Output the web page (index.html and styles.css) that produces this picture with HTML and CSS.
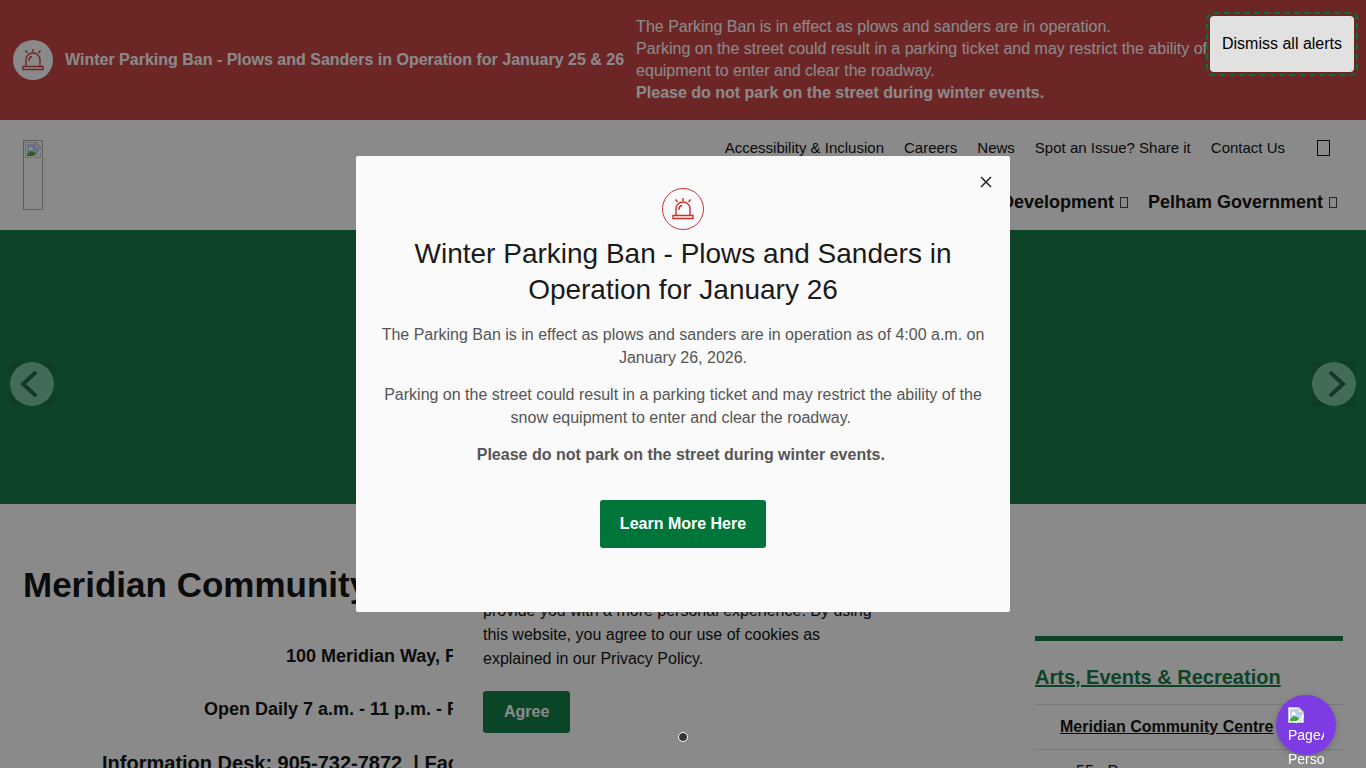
FILE: index.html
```html
<!DOCTYPE html>
<html lang="en"><head>
    <meta charset="UTF-8">
    <meta name="viewport" content="width=device-width, initial-scale=1.0">
    <title>Meridian Community Centre</title>
    <link rel="stylesheet" href="styles.css">
</head>
<body>
    <svg class="sprite" aria-hidden="true">
        <symbol id="siren" viewBox="0 0 24 24">
            <path d="M5 18.5V11.500a7 6.500 0 0 1 14 0v7M2 18.500h20v3h-20zM8 13v-1a4 3.500 0 0 1 3-3.500M12 1v3M4.500 2.500l2 2.500M19.500 2.500l-2 2.500" fill="none" stroke="currentColor" stroke-width="1.400"/>
        </symbol>
        <symbol id="broken" viewBox="0 0 16 16">
            <path d="M0 0h11l5 5v11H0z" fill="#c4c4c4"/>
            <path d="M1 1h9v5h5v9H1z" fill="#fff"/>
            <path d="M2 2h8v4h4v8H2z" fill="#b9d3f5"/>
            <path d="M4 6.500a1.500 1.500 0 0 1 3-.5 1 1 0 0 1 0 2H4z" fill="#fff"/>
            <path d="M2 14v-2l4-3 3 1 3 2v2z" fill="#46a33b"/>
            <path d="M10 0v6h6z" fill="#eee" stroke="#aaa" stroke-width=".7"/>
            <path d="M16 8v2l-7 6H6z" fill="#fff"/>
        </symbol>
    </svg>

    <section class="alert">
        <div class="alert-icon"><svg><use href="#siren"/></svg></div>
        <strong class="alert-title">Winter Parking Ban - Plows and Sanders in Operation for January 25 &amp; 26</strong>
        <div class="alert-text">
            The Parking Ban is in effect as plows and sanders are in operation.<br>
            Parking on the street could result in a parking ticket and may restrict the ability of the snow equipment to enter and clear the roadway.<br>
            <strong>Please do not park on the street during winter events.</strong>
        </div>
    </section>

    <header class="header">
        <a href="#" class="logo" aria-label="Home"><svg><use href="#broken"/></svg></a>
        <div class="menus">
            <nav class="top-links">
                <a href="#">Accessibility &amp; Inclusion</a>
                <a href="#">Careers</a>
                <a href="#">News</a>
                <a href="#">Spot an Issue? Share it</a>
                <a href="#">Contact Us</a>
                <button class="search" aria-label="Search"></button>
            </nav>
            <nav class="main-nav">
                <a href="#">Business Development <span class="caret"></span></a>
                <a href="#">Pelham Government <span class="caret"></span></a>
            </nav>
        </div>
    </header>

    <div class="hero"></div>

    <div class="page">
        <main class="content">
            <h1>Meridian Community Centre</h1>
            <p>100 Meridian Way, Fonthill, Ontario, Canada L0S 1E</p>
            <p>Open Daily 7 a.m. - 11 p.m. - Front Doors Lock at 10:30 p.m. each night</p>
            <p class="phones">Information Desk: 905-732-7872 &nbsp;| Facility Rentals and Room Bookings: 905-980-6661</p>
        </main>
        <aside class="sidebar">
            <h2><a href="#">Arts, Events &amp; Recreation</a></h2>
            <ul>
                <li><a href="#" class="current">Meridian Community Centre</a></li>
                <li><a href="#" class="child">55+ Programs</a></li>
            </ul>
        </aside>
    </div>

    <div class="cookies">
        <p>This website uses cookies to enhance usability and provide you with a more personal experience. By using this website, you agree to our use of cookies as explained in our Privacy Policy.</p>
        <button class="btn">Agree</button>
    </div>

    <div class="overlay">
        <button class="arrow" aria-label="Previous"><svg viewBox="0 0 44 44"><path d="M25 11L13 22l12 11"/></svg></button>
        <div class="modal" role="dialog" aria-labelledby="modal-title">
            <button class="close" aria-label="Close"><svg viewBox="0 0 10 10"><path d="M0 0l10 10M10 0L0 10"/></svg></button>
            <div class="modal-icon"><svg><use href="#siren"/></svg></div>
            <h2 id="modal-title">Winter Parking Ban - Plows and Sanders in Operation for January 26</h2>
            <p>The Parking Ban is in effect as plows and sanders are in operation as of 4:00 a.m. on January 26, 2026.</p>
            <p>Parking on the street could result in a parking ticket and may restrict the ability of the snow equipment to enter and clear the roadway.&nbsp;</p>
            <p><strong>Please do not park on the street during winter events.&nbsp;</strong></p>
            <a href="#" class="btn learn">Learn More Here</a>
        </div>
        <button class="arrow" aria-label="Next"><svg viewBox="0 0 44 44"><path d="M19 11l12 11-12 11"/></svg></button>
        <span class="dot"></span>
    </div>

    <button class="dismiss">Dismiss all alerts</button>
    <button class="assist">
        <span class="assist-label"><svg><use href="#broken"/></svg> PageAssist Personalize</span>
    </button>
</body>
</html>
```
FILE: styles.css
```css
* {
    box-sizing: border-box;
}
body {
    margin: 0;
    height: 100vh;
    overflow: hidden;
    font-family: "Liberation Sans", Arial, sans-serif;
    font-size: 16px;
    color: #000;
    background: #fff;
}
button {
    font-family: inherit;
    font-size: 16px;
    border: none;
    padding: 0;
    cursor: pointer;
}
a {
    color: inherit;
    text-decoration: none;
}
svg {
    display: block;
}
.sprite {
    position: absolute;
    width: 0;
    height: 0;
}

/* alert bar */
.alert {
    display: flex;
    align-items: center;
    gap: 12px;
    padding: 16px 13px;
    line-height: 22px;
    color: #fff;
    background: #c53737;
}
.alert-icon {
    display: flex;
    align-items: center;
    justify-content: center;
    flex: none;
    width: 40px;
    height: 40px;
    border-radius: 50%;
    color: #c53737;
    background: #fff;
}
.alert-icon svg {
    width: 24px;
    height: 24px;
}
.alert-title {
    flex: none;
}
.alert-text {
    flex: 1;
}
.dismiss {
    position: fixed;
    top: 16px;
    right: 12px;
    z-index: 20;
    padding: 19px 12px;
    line-height: 18px;
    color: #000;
    background: #e1e1e1;
    border-radius: 4px;
    outline: 2px dashed #007539;
    outline-offset: 2px;
}

/* header */
.header {
    display: flex;
    justify-content: space-between;
    padding: 20px 23px;
    height: 110px;
}
.logo {
    width: 20px;
    height: 70px;
    padding: 1px;
    border: 1px solid #aaa;
}
.logo svg {
    width: 16px;
    height: 16px;
}
.top-links,
.main-nav {
    display: flex;
    justify-content: flex-end;
    align-items: center;
    gap: 20px;
}
.top-links {
    font-size: 15px;
    line-height: 16px;
    padding-right: 13px;
}
.search {
    width: 13px;
    height: 16px;
    margin-left: 12px;
    background: none;
    border: 1px solid #000;
}
.main-nav {
    margin-top: 36px;
    padding-right: 6px;
    font-size: 18px;
    font-weight: bold;
    line-height: 20px;
}
.caret {
    display: inline-block;
    width: 8px;
    height: 11px;
    margin-left: 1px;
    border: 1px solid #333;
}
.hero {
    height: 274px;
    background: #057339;
}

/* page */
.page {
    display: grid;
    grid-template-columns: 1fr 308px;
    gap: 48px;
    padding: 60px 23px 0;
}
.content h1 {
    margin: 0 0 40px;
    font-size: 35px;
    line-height: 42px;
}
.content p {
    margin: 0 0 33px;
    font-size: 18px;
    font-weight: bold;
    line-height: 20px;
    text-align: center;
    white-space: nowrap;
}
.content .phones {
    font-size: 20px;
    line-height: 22px;
}
.sidebar {
    margin-top: 72px;
    border-top: 5px solid #057339;
}
.sidebar h2 {
    margin: 24px 0 15px;
    font-size: 20px;
    line-height: 24px;
    color: #057339;
}
.sidebar h2 a,
.current {
    text-decoration: underline;
}
.sidebar ul {
    margin: 0;
    padding: 0;
    list-style: none;
}
.sidebar li {
    padding: 12px 0 12px 25px;
    line-height: 20px;
    border-top: 1px solid #ddd;
}
.current {
    font-weight: bold;
}
.child {
    padding-left: 16px;
}

/* cookie notice */
.cookies {
    position: fixed;
    left: 50%;
    bottom: 0;
    width: 460px;
    margin-left: -230px;
    padding: 30px 30px 35px;
    background: #fff;
}
.cookies p {
    margin: 0 0 20px;
    line-height: 24px;
}
.btn {
    display: inline-block;
    padding: 12px 21px;
    line-height: 18px;
    font-weight: bold;
    color: #fff;
    background: #007539;
    border-radius: 3px;
}

/* modal */
.overlay {
    position: fixed;
    inset: 0;
    z-index: 10;
    display: flex;
    align-items: center;
    justify-content: space-between;
    padding: 0 10px;
    background: rgba(21, 21, 21, 0.5);
}
.arrow {
    width: 44px;
    height: 44px;
    border-radius: 50%;
    background: rgba(255, 255, 255, 0.75);
    opacity: 0.3;
}
.arrow path {
    fill: none;
    stroke: #222;
    stroke-width: 4;
    stroke-linecap: round;
}
.modal {
    position: relative;
    width: 654px;
    padding: 32px 24px 64px;
    text-align: center;
    background: #fafafa;
    border-radius: 2px;
}
.modal-icon {
    display: flex;
    align-items: center;
    justify-content: center;
    width: 42px;
    height: 42px;
    margin: 0 auto;
    border: 1px solid #c53737;
    border-radius: 50%;
    color: #c9302c;
}
.modal-icon svg {
    width: 24px;
    height: 24px;
}
.modal h2 {
    margin: 6px 0 15px;
    font-size: 28px;
    font-weight: normal;
    line-height: 36px;
    color: #1a1a1a;
}
.modal p {
    margin: 0 0 14px;
    line-height: 23px;
    color: #555;
}
.modal .learn {
    margin-top: 20px;
    padding: 15px 20px;
}
.close {
    position: absolute;
    top: 16px;
    right: 14px;
    padding: 5px;
    background: none;
}
.close svg {
    width: 10px;
    height: 10px;
    overflow: visible;
}
.close path {
    stroke: #222;
    stroke-width: 1.5;
}
.dot {
    position: absolute;
    left: 50%;
    bottom: 26px;
    width: 10px;
    height: 10px;
    margin-left: -5px;
    border: 1px solid #fff;
    border-radius: 50%;
    background: #333;
}

/* assistant button */
.assist {
    position: fixed;
    right: 30px;
    bottom: 13px;
    z-index: 20;
    width: 60px;
    height: 60px;
    padding: 12px;
    border-radius: 50%;
    color: #fff;
    background: #7c3be3;
    box-shadow: 0 2px 6px rgba(0, 0, 0, 0.2);
}
.assist-label {
    display: block;
    width: 36px;
    height: 36px;
    overflow-x: clip;
    font-size: 14px;
    line-height: 24px;
    text-align: left;
}
.assist-label svg {
    width: 16px;
    height: 16px;
}
```
